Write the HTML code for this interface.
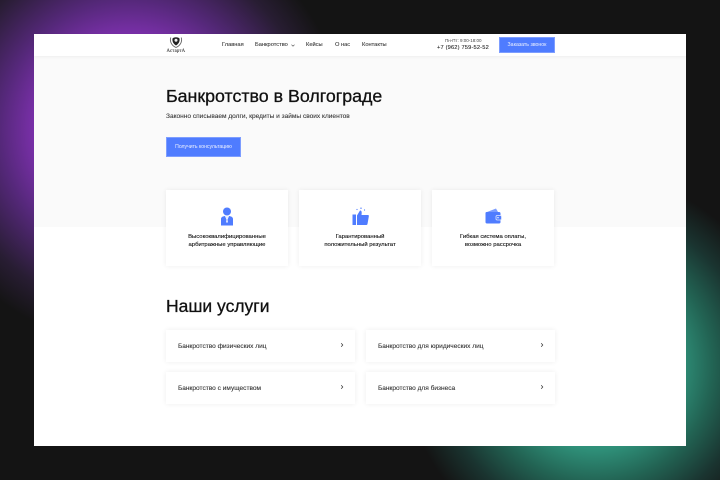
<!DOCTYPE html>
<html lang="ru"><head><meta charset="utf-8"><title>Банкротство в Волгограде</title>
<style>
*{box-sizing:border-box;margin:0;padding:0}
html,body{width:720px;height:480px;overflow:hidden;background:#141414;font-family:"Liberation Sans","DejaVu Sans",sans-serif}
#root{position:relative;width:720px;height:480px;overflow:hidden;background:
radial-gradient(circle 190px at 595px 365px,#2f9079 0,#2f9079 84px,#226353 118px,#1a3430 155px,rgba(20,20,20,0) 190px),
radial-gradient(circle 215px at 130px 130px,#7b30ab 0,#7b30ab 94px,#55287a 130px,#281d33 180px,rgba(20,20,20,0) 215px),#141414}
.a{position:absolute}
.t{position:absolute;white-space:nowrap;line-height:1}
.card{position:absolute;top:190px;width:122px;height:76px;background:#fff;box-shadow:0 0 5px rgba(0,0,0,.07)}
.card p{position:absolute;left:0;right:0;top:42.500px;text-align:center;font-size:5.900px;line-height:8.300px;color:#111;-webkit-text-stroke:.12px #111}
.svc{position:absolute;width:189px;height:32px;background:#fff;box-shadow:0 0 5px rgba(0,0,0,.07);font-size:6.550px;color:#333}
.svc span{position:absolute;left:12px;top:14px;line-height:1;white-space:nowrap;-webkit-text-stroke:.1px #333}
.svc svg{position:absolute;right:11.500px;top:12px}
.nav{font-size:5.700px;color:#333;top:43px;-webkit-text-stroke:.08px #333}
.btn{position:absolute;background:#4f7cff;border:.5px solid #7d9dff}
</style></head><body><div id="root">
<div class="a" style="left:34px;top:34px;width:652px;height:412px;background:#fff"></div>
<div class="a" style="left:34px;top:56px;width:652px;height:171px;background:#fafafa"></div>
<div class="a" style="left:34px;top:34px;width:652px;height:22px;background:#fff;box-shadow:0 1px 3px rgba(0,0,0,.05)"></div>

<svg class="a" style="left:168px;top:36px" width="16" height="13" viewBox="0 0 16 13"><path d="M2.800 1.500C1.600 5 3.200 9.500 8 11.500C12.800 9.500 14.400 5 13.200 1.500" fill="none" stroke="#666" stroke-width=".9"/><path d="M4.500 2.500C5.500 .8 10.500 .8 11.500 2.500C12 5.500 10.500 8 8 9.500C5.500 8 4 5.500 4.500 2.500Z" fill="#222"/><circle cx="8" cy="4.300" r="1.500" fill="#eee"/></svg>
<div class="t" style="left:166.500px;top:50px;font-size:4.800px;font-family:'Liberation Serif',serif;color:#333;letter-spacing:.15px;-webkit-text-stroke:.08px #333">АстартА</div>

<div class="t nav" style="left:222px">Главная</div>
<div class="t nav" style="left:255px">Банкротство</div>
<svg class="a" style="left:290.500px;top:43.500px" width="4" height="3" viewBox="0 0 4 3"><path d="M.5.700 2 2.200 3.500.700" fill="none" stroke="#444" stroke-width=".6"/></svg>
<div class="t nav" style="left:306px">Кейсы</div>
<div class="t nav" style="left:335px">О нас</div>
<div class="t nav" style="left:362px">Контакты</div>
<div class="t" style="left:445px;top:38.500px;font-size:4.500px;color:#444">Пн-Пт: 9:00-18:00</div>
<div class="t" style="left:437px;top:45.500px;font-size:5.700px;color:#222;letter-spacing:.17px;-webkit-text-stroke:.08px #222">+7 (962) 759-52-52</div>
<div class="btn" style="left:499px;top:37px;width:56px;height:16px"></div>
<div class="t" style="left:499px;top:43px;width:56px;text-align:center;font-size:5.200px;color:#eef2ff">Заказать звонок</div>

<div class="t" style="left:166px;top:88px;font-size:17.800px;color:#111;-webkit-text-stroke:.3px #111">Банкротство в Волгограде</div>
<div class="t" style="left:166px;top:114px;font-size:6.550px;color:#333;-webkit-text-stroke:.08px #333">Законно списываем долги, кредиты и займы своих клиентов</div>
<div class="btn" style="left:166px;top:137px;width:75px;height:20px"></div>
<div class="t" style="left:166px;top:145px;width:75px;text-align:center;font-size:5.100px;color:#eef2ff">Получить консультацию</div>

<div class="card" style="left:166px"><p>Высококвалифицированные<br>арбитражные управляющие</p>
<svg class="a" style="left:54px;top:17px" width="14" height="19" viewBox="0 0 14 19"><circle cx="7" cy="4.500" r="4" fill="#4f7cff"/><path d="M1 18.500V12C1 10 3 9.300 5 9L7 14 9 9C11 9.300 13 10 13 12V18.500Z" fill="#4f7cff"/><path d="M6 9.500H8L7.500 12 8 15 7 16 6 15 6.500 12Z" fill="#dfe7ff"/></svg></div>
<div class="card" style="left:299px"><p>Гарантированный<br>положительный результат</p>
<svg class="a" style="left:53px;top:17px" width="17" height="19" viewBox="0 0 17 19"><rect x=".5" y="7.500" width="3.500" height="10.500" fill="#4f7cff"/><path d="M5 8.500L8 3.500C9.500 3.500 10 4.500 9.500 8H16C16.800 8 17 8.800 16.800 9.500L15.500 17C15.300 17.700 14.800 18 14 18H5Z" fill="#4f7cff"/><circle cx="9" cy="1.200" r=".7" fill="#4f7cff"/><circle cx="5" cy="2.500" r=".6" fill="#4f7cff"/><circle cx="12.500" cy="3" r=".6" fill="#4f7cff"/></svg></div>
<div class="card" style="left:432px"><p>Гибкая система оплаты,<br>возможно рассрочка</p>
<svg class="a" style="left:53px;top:18px" width="17" height="16" viewBox="0 0 17 16"><path d="M2 4L11 .5 13 4Z" fill="#7c9dff"/><path d="M1.500 4H14C15 4 15.500 4.500 15.500 5.500V14C15.500 15 15 15.500 14 15.500H2C1 15.500.5 15 .5 14V5C.5 4.500 1 4 1.500 4Z" fill="#4f7cff"/><rect x="11" y="7.500" width="5.500" height="4.500" rx="1.200" fill="#4f7cff" stroke="#dfe7ff" stroke-width=".8"/><circle cx="13" cy="9.700" r=".7" fill="#fff"/></svg></div>

<div class="t" style="left:166px;top:297.500px;font-size:17.500px;color:#111;-webkit-text-stroke:.3px #111">Наши услуги</div>

<div class="svc" style="left:166px;top:330px"><span>Банкротство физических лиц</span><svg width="4" height="6" viewBox="0 0 4 6"><path d="M1.200 1.300 2.800 3 1.200 4.700" fill="none" stroke="#333" stroke-width=".7"/></svg></div>
<div class="svc" style="left:366px;top:330px"><span>Банкротство для юридических лиц</span><svg width="4" height="6" viewBox="0 0 4 6"><path d="M1.200 1.300 2.800 3 1.200 4.700" fill="none" stroke="#333" stroke-width=".7"/></svg></div>
<div class="svc" style="left:166px;top:372px"><span>Банкротство с имуществом</span><svg width="4" height="6" viewBox="0 0 4 6"><path d="M1.200 1.300 2.800 3 1.200 4.700" fill="none" stroke="#333" stroke-width=".7"/></svg></div>
<div class="svc" style="left:366px;top:372px"><span>Банкротство для бизнеса</span><svg width="4" height="6" viewBox="0 0 4 6"><path d="M1.200 1.300 2.800 3 1.200 4.700" fill="none" stroke="#333" stroke-width=".7"/></svg></div>
</div></body></html>
